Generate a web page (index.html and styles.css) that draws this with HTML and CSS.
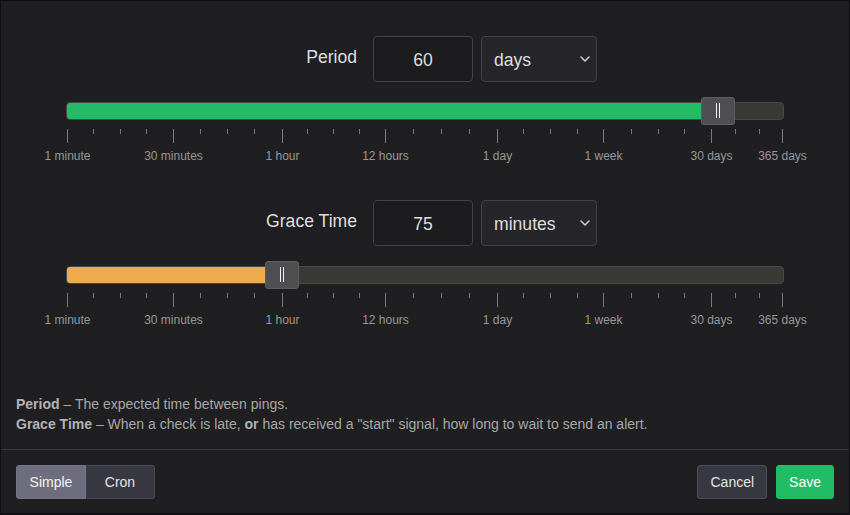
FILE: index.html
```html
<!DOCTYPE html>
<html>

<head>
	<title>Period and Grace Time</title>
	<link rel="stylesheet" href="styles.css">
</head>

<body>
	<div class="modal">
		<div class="modal-body">

			<!-- Period -->
			<div class="setting">
				<div class="field-row">
					<label class="field-label">Period</label>
					<input class="num-input" type="text" value="60">
					<div class="unit-select">
						<span>days</span>
						<svg class="chevron" width="10" height="6" viewBox="0 0 10 6"><polyline points="1,1 5,5 9,1" /></svg>
					</div>
				</div>
				<div class="slider">
					<div class="track">
						<div class="fill fill-green" style="width: 651px"></div>
						<div class="handle" style="left: 634px"></div>
					</div>
					<div class="pips">
						<div class="tick major" style="left: 1px"></div>
						<div class="tick" style="left: 27px"></div>
						<div class="tick" style="left: 54px"></div>
						<div class="tick" style="left: 80px"></div>
						<div class="tick major" style="left: 107px"></div>
						<div class="tick" style="left: 134px"></div>
						<div class="tick" style="left: 161px"></div>
						<div class="tick" style="left: 188px"></div>
						<div class="tick major" style="left: 216px"></div>
						<div class="tick" style="left: 241px"></div>
						<div class="tick" style="left: 267px"></div>
						<div class="tick" style="left: 293px"></div>
						<div class="tick major" style="left: 319px"></div>
						<div class="tick" style="left: 347px"></div>
						<div class="tick" style="left: 375px"></div>
						<div class="tick" style="left: 403px"></div>
						<div class="tick major" style="left: 431px"></div>
						<div class="tick" style="left: 457px"></div>
						<div class="tick" style="left: 484px"></div>
						<div class="tick" style="left: 511px"></div>
						<div class="tick major" style="left: 537px"></div>
						<div class="tick" style="left: 565px"></div>
						<div class="tick" style="left: 592px"></div>
						<div class="tick" style="left: 618px"></div>
						<div class="tick major" style="left: 645px"></div>
						<div class="tick" style="left: 669px"></div>
						<div class="tick" style="left: 693px"></div>
						<div class="tick major" style="left: 716px"></div>

						<div class="pip-label" style="left: 1.5px">1 minute</div>
						<div class="pip-label" style="left: 107.5px">30 minutes</div>
						<div class="pip-label" style="left: 216.5px">1 hour</div>
						<div class="pip-label" style="left: 319.5px">12 hours</div>
						<div class="pip-label" style="left: 431.5px">1 day</div>
						<div class="pip-label" style="left: 537.5px">1 week</div>
						<div class="pip-label" style="left: 645.5px">30 days</div>
						<div class="pip-label" style="left: 716.5px">365 days</div>
					</div>
				</div>
			</div>

			<!-- Grace Time -->
			<div class="setting">
				<div class="field-row">
					<label class="field-label">Grace Time</label>
					<input class="num-input" type="text" value="75">
					<div class="unit-select">
						<span>minutes</span>
						<svg class="chevron" width="10" height="6" viewBox="0 0 10 6"><polyline points="1,1 5,5 9,1" /></svg>
					</div>
				</div>
				<div class="slider">
					<div class="track">
						<div class="fill fill-orange" style="width: 215px"></div>
						<div class="handle" style="left: 198px"></div>
					</div>
					<div class="pips">
						<div class="tick major" style="left: 1px"></div>
						<div class="tick" style="left: 27px"></div>
						<div class="tick" style="left: 54px"></div>
						<div class="tick" style="left: 80px"></div>
						<div class="tick major" style="left: 107px"></div>
						<div class="tick" style="left: 134px"></div>
						<div class="tick" style="left: 161px"></div>
						<div class="tick" style="left: 188px"></div>
						<div class="tick major" style="left: 216px"></div>
						<div class="tick" style="left: 241px"></div>
						<div class="tick" style="left: 267px"></div>
						<div class="tick" style="left: 293px"></div>
						<div class="tick major" style="left: 319px"></div>
						<div class="tick" style="left: 347px"></div>
						<div class="tick" style="left: 375px"></div>
						<div class="tick" style="left: 403px"></div>
						<div class="tick major" style="left: 431px"></div>
						<div class="tick" style="left: 457px"></div>
						<div class="tick" style="left: 484px"></div>
						<div class="tick" style="left: 511px"></div>
						<div class="tick major" style="left: 537px"></div>
						<div class="tick" style="left: 565px"></div>
						<div class="tick" style="left: 592px"></div>
						<div class="tick" style="left: 618px"></div>
						<div class="tick major" style="left: 645px"></div>
						<div class="tick" style="left: 669px"></div>
						<div class="tick" style="left: 693px"></div>
						<div class="tick major" style="left: 716px"></div>

						<div class="pip-label" style="left: 1.5px">1 minute</div>
						<div class="pip-label" style="left: 107.5px">30 minutes</div>
						<div class="pip-label" style="left: 216.5px">1 hour</div>
						<div class="pip-label" style="left: 319.5px">12 hours</div>
						<div class="pip-label" style="left: 431.5px">1 day</div>
						<div class="pip-label" style="left: 537.5px">1 week</div>
						<div class="pip-label" style="left: 645.5px">30 days</div>
						<div class="pip-label" style="left: 716.5px">365 days</div>
					</div>
				</div>
			</div>

			<div class="help">
				<p><strong>Period</strong> &ndash; The expected time between pings.</p>
				<p><strong>Grace Time</strong> &ndash; When a check is late, <strong>or</strong> has received a "start" signal, how long to wait to send an alert.</p>
			</div>
		</div>

		<div class="modal-footer">
			<div class="btn-group">
				<button class="btn btn-active btn-simple">Simple</button>
				<button class="btn btn-cron">Cron</button>
			</div>
			<div class="actions">
				<button class="btn">Cancel</button>
				<button class="btn btn-save">Save</button>
			</div>
		</div>
	</div>
</body>

</html>
```

FILE: styles.css
```css
body {
	margin: 0;
	padding: 0;
	height: 515px;
	overflow: hidden;
	background-color: #141416;
	font-family: "Liberation Sans", Arial, sans-serif;
}

.modal {
	width: 850px;
	box-sizing: border-box;
	background-color: #1f1f22;
	border: 1px solid #0e0e10;
}

.modal-body {
	padding: 35px 15px 15px 15px;
}

/* one block = input row + slider + scale */
.setting {
	margin-bottom: 36px;
}

.field-row {
	display: flex;
	align-items: center;
	height: 46px;
}

.field-label {
	width: 341px;
	margin-right: 16px;
	padding-bottom: 3px;
	text-align: right;
	font-size: 17.6px;
	color: #dedede;
}

.num-input {
	width: 100px;
	height: 46px;
	box-sizing: border-box;
	margin: 0 8px 0 0;
	padding: 2px 0 0 0;
	background-color: #1c1c1e;
	border: 1px solid #434346;
	border-radius: 4px;
	color: #dedede;
	font-family: inherit;
	font-size: 17.6px;
	text-align: center;
	outline: none;
}

.unit-select {
	width: 116px;
	height: 46px;
	box-sizing: border-box;
	display: flex;
	align-items: center;
	justify-content: space-between;
	padding: 2px 6px 0 12px;
	background-color: #26262a;
	border: 1px solid #434346;
	border-radius: 4px;
	color: #dedede;
	font-size: 17.6px;
}

.chevron {
	margin-top: -2px;
}

.chevron polyline {
	fill: none;
	stroke: #d0d0d0;
	stroke-width: 1.5;
	stroke-linecap: round;
	stroke-linejoin: round;
}

.slider {
	margin-left: 50px;
	width: 718px;
	padding-top: 20px;
}

.track {
	position: relative;
	height: 18px;
	box-sizing: border-box;
	background-color: #3a3936;
	border: 1px solid #47484a;
	border-radius: 4px;
}

.fill {
	position: absolute;
	top: 0;
	bottom: 0;
	left: 0;
	border-radius: 3px 0 0 3px;
}

.fill-green {
	background-color: #22bc66;
}

.fill-orange {
	background-color: #efab4f;
}

.handle {
	position: absolute;
	top: -6px;
	width: 34px;
	height: 28px;
	box-sizing: border-box;
	background-color: #4f4f51;
	border: 1px solid #5e5e60;
	border-radius: 3px;
}

/* the two grip lines */
.handle::before,
.handle::after {
	content: "";
	position: absolute;
	top: 5px;
	width: 1px;
	height: 15px;
	background-color: #f2f2f2;
}

.handle::before {
	left: 14px;
}

.handle::after {
	left: 17px;
}

.pips {
	position: relative;
	height: 35px;
	margin-top: 9px;
}

.tick {
	position: absolute;
	top: 0;
	width: 1px;
	height: 5px;
	background-color: #7a7a7a;
}

.tick.major {
	height: 14px;
}

.pip-label {
	position: absolute;
	top: 20px;
	transform: translateX(-50%);
	white-space: nowrap;
	font-size: 12px;
	line-height: 14px;
	color: #979797;
}

/* margin collapses with the block above, so this is the full gap */
.help {
	margin-top: 66px;
	font-size: 14px;
	line-height: 20px;
	color: #a7a7a7;
}

.help p {
	margin: 0;
}

.help strong {
	color: #b3b3b3;
}

.modal-footer {
	display: flex;
	justify-content: space-between;
	border-top: 1px solid #37373b;
	padding: 15px 15px 14px 15px;
}

.btn {
	height: 34px;
	box-sizing: border-box;
	padding: 6px 12px;
	background-color: #383842;
	border: 1px solid #4a4a54;
	border-radius: 3px;
	color: #e4e4e4;
	font-family: inherit;
	font-size: 14px;
	line-height: 20px;
}

.btn-group {
	display: flex;
}

.btn-simple {
	width: 70px;
	border-radius: 3px 0 0 3px;
}

.btn-cron {
	width: 69px;
	border-left: none;
	border-radius: 0 3px 3px 0;
}

.btn-active {
	background-color: #6d6d7d;
	border-color: #76768a;
	color: #f4f4f4;
}

.actions {
	display: flex;
	gap: 9px;
}

.btn-save {
	background-color: #22bc66;
	border-color: #22bc66;
	color: #fff;
}
```
